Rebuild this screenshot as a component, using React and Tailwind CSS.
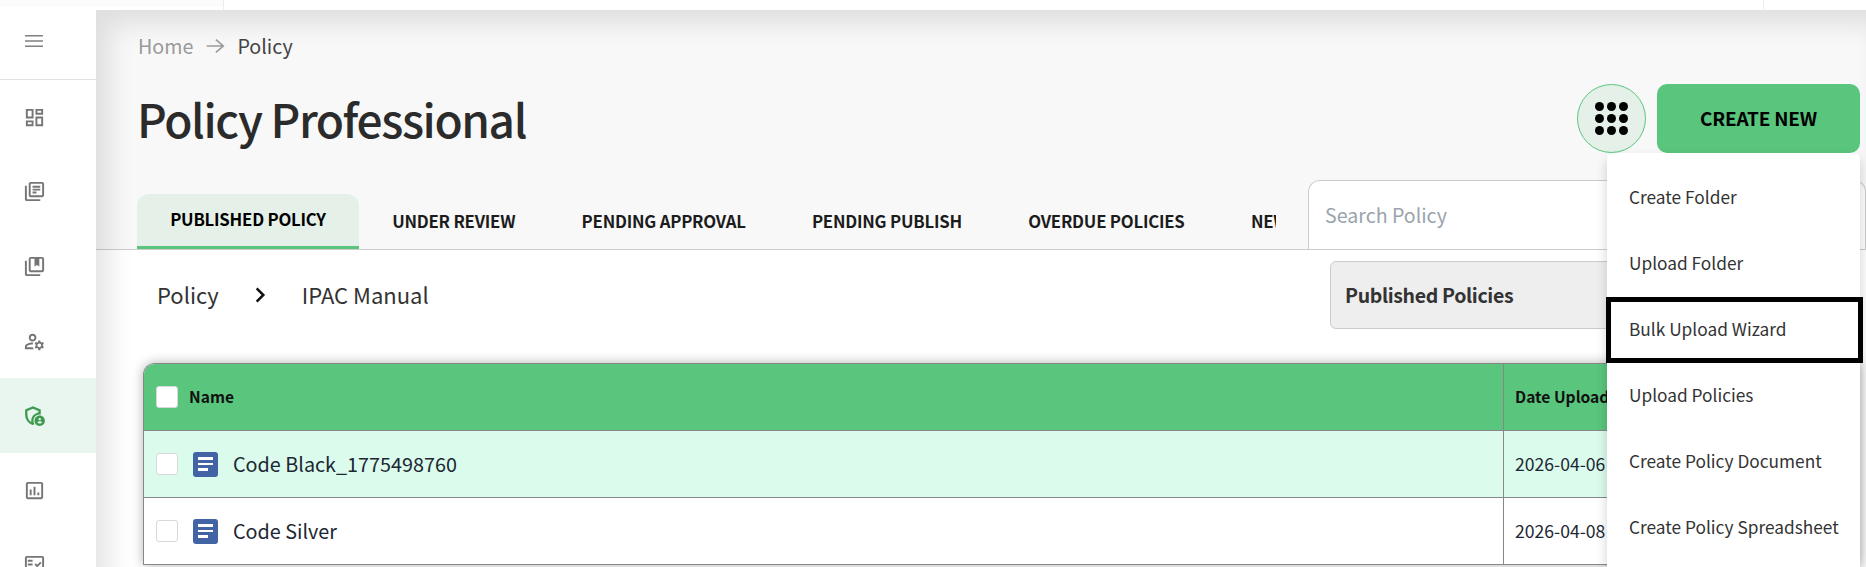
import { useState } from 'react';

const font = '[font-family:"Noto_Sans_CJK_SC","Noto_Sans",sans-serif]';

// Material outlined icons for the sidebar
const NAV_ICONS = [
  { d: 'M19 5v2h-4V5h4M9 5v6H5V5h4m10 8v6h-4v-6h4M9 17v2H5v-2h4M21 3h-8v6h8V3zM11 3H3v10h8V3zm10 8h-8v10h8V11zm-10 4H3v6h8v-6z' },
  { d: 'M4 6H2v14c0 1.1.9 2 2 2h14v-2H4V6zm16-4H8c-1.1 0-2 .9-2 2v12c0 1.1.9 2 2 2h12c1.1 0 2-.9 2-2V4c0-1.1-.9-2-2-2zm0 14H8V4h12v12zM10 9h8v2h-8zm0 3h4v2h-4zm0-6h8v2h-8z' },
  { d: 'M4 6H2v14c0 1.1.9 2 2 2h14v-2H4V6zm16-4H8c-1.1 0-2 .9-2 2v12c0 1.1.9 2 2 2h12c1.1 0 2-.9 2-2V4c0-1.1-.9-2-2-2zm0 14H8V4h4v8l2.5-1.5L17 12V4h3v12z' },
  { d: 'M4 18v-.65c0-.34.16-.66.41-.81C6.1 15.53 8.03 15 10 15c.03 0 .05 0 .08.01.1-.7.3-1.37.59-1.98-.22-.02-.44-.03-.67-.03-2.42 0-4.68.67-6.61 1.82-.88.52-1.39 1.5-1.39 2.53V20h9.26c-.42-.6-.75-1.28-.97-2H4zM10 12c2.21 0 4-1.79 4-4s-1.79-4-4-4-4 1.79-4 4 1.79 4 4 4zm0-6c1.1 0 2 .9 2 2s-.9 2-2 2-2-.9-2-2 .9-2 2-2zM20.75 16c0-.22-.03-.42-.06-.63l1.14-1.01-1-1.73-1.45.49c-.32-.27-.68-.48-1.08-.63L18 11h-2l-.3 1.49c-.4.15-.76.36-1.08.63l-1.45-.49-1 1.73 1.14 1.01c-.03.21-.06.41-.06.63s.03.42.06.63l-1.14 1.01 1 1.73 1.45-.49c.32.27.68.48 1.08.63L16 21h2l.3-1.49c.4-.15.76-.36 1.08-.63l1.45.49 1-1.73-1.14-1.01c.03-.21.06-.41.06-.63zM17 18c-1.1 0-2-.9-2-2s.9-2 2-2 2 .9 2 2-.9 2-2 2z' },
  {
    active: true,
    d: 'M17 11c.34 0 .67.04 1 .09V6.27L10.5 3 3 6.27v4.91c0 4.54 3.2 8.79 7.5 9.82.55-.13 1.08-.32 1.6-.55-.69-.98-1.1-2.17-1.1-3.45 0-3.31 2.69-6 6-6zM5.2 11.18V7.7l5.3-2.3 5.3 2.3v1.5c-3.4.6-6.9 3.5-6.9 7.8 0 .5.05.9.15 1.3C6.9 17.2 5.2 14.3 5.2 11.18zM17 12c-2.76 0-5 2.24-5 5s2.24 5 5 5 5-2.24 5-5-2.24-5-5-5zm0 2.38c.62 0 1.12.51 1.12 1.12s-.51 1.12-1.12 1.12-1.12-.51-1.12-1.12.5-1.12 1.12-1.12zm0 5.37c-.93 0-1.74-.46-2.24-1.17.05-.72 1.51-1.08 2.24-1.08s2.19.36 2.24 1.08c-.5.71-1.31 1.17-2.24 1.17z',
  },
  { d: 'M19 3H5c-1.1 0-2 .9-2 2v14c0 1.1.9 2 2 2h14c1.1 0 2-.9 2-2V5c0-1.1-.9-2-2-2zm0 16H5V5h14v14zM7 11h2v6H7zm4-3h2v9h-2zm4 6h2v3h-2z' },
  { d: 'M20 3H4c-1.1 0-2 .9-2 2v14c0 1.1.9 2 2 2h16c1.1 0 2-.9 2-2V5c0-1.1-.9-2-2-2zm0 16H4V5h16v14zM19.41 10.42 17.99 9l-3.17 3.17-1.41-1.42L12 12.16 14.82 15zM5 7h5v2H5zm0 4h5v2H5zm0 4h5v2H5z' },
];

const TABS = ['PUBLISHED POLICY', 'UNDER REVIEW', 'PENDING APPROVAL', 'PENDING PUBLISH', 'OVERDUE POLICIES', 'NEW POLICIES'];

const MENU_ITEMS = ['Create Folder', 'Upload Folder', 'Bulk Upload Wizard', 'Upload Policies', 'Create Policy Document', 'Create Policy Spreadsheet'];

const ROWS = [
  { name: 'Code Black_1775498760', date: '2026-04-06', bg: 'bg-[#dbfbec]' },
  { name: 'Code Silver', date: '2026-04-08', bg: 'bg-white' },
];

function MaterialIcon({ d, className }) {
  return (
    <svg viewBox="0 0 24 24" fill="currentColor" fillRule="evenodd" className={className}>
      <path d={d} />
    </svg>
  );
}

function Sidebar() {
  return (
    <aside className="w-[96px] shrink-0 bg-white">
      <div className="h-[70px] pr-[28px] pb-[7px] flex items-center justify-center border-b border-[#e2e2e2] text-[#808080]">
        <svg viewBox="0 0 24 24" fill="currentColor" className="w-[24px] h-[24px]">
          <path d="M3 18h18v-1.5H3V18zm0-5.25h18v-1.5H3v1.5zM3 6v1.5h18V6H3z" />
        </svg>
      </div>
      {NAV_ICONS.map((item) => (
        <div
          key={item.d}
          className={`h-[74.6px] pr-[28px] flex items-center justify-center ${
            item.active ? 'bg-[#e9f6ef] text-[#3e9a4f]' : 'text-[#757575]'
          }`}
        >
          <MaterialIcon d={item.d} className={item.active ? 'w-[25px] h-[25px]' : 'w-[23px] h-[23px]'} />
        </div>
      ))}
    </aside>
  );
}

function DotsButton() {
  return (
    <button className="w-[69px] h-[69px] rounded-full bg-[#e5f1e8] border border-[#5ac57d] flex items-center justify-center">
      <div className="grid grid-cols-3 gap-[3px]">
        {Array.from({ length: 9 }).map((_, i) => (
          <span key={i} className="w-[9px] h-[9px] rounded-full bg-black" />
        ))}
      </div>
    </button>
  );
}

function CreateMenu() {
  return (
    <div className="absolute left-[1607px] top-[153px] w-[253px] h-[414px] bg-white rounded-t-[6px] pt-[12px] shadow-[0_6px_12px_rgba(0,0,0,0.18)]">
      {MENU_ITEMS.map((label, i) =>
        i === 2 ? (
          <div
            key={label}
            className="h-[66px] -ml-px -mr-[3px] pl-[18px] pb-[3px] flex items-center border-[5px] border-black bg-white text-[17.3px] text-[#333]"
          >
            {label}
          </div>
        ) : (
          <div key={label} className="h-[66px] pl-[22px] pb-[3px] flex items-center text-[17.3px] text-[#333]">
            {label}
          </div>
        )
      )}
    </div>
  );
}

function DocIcon() {
  return (
    <div className="w-[25px] h-[25px] rounded-[3px] bg-[#4264a4] flex flex-col justify-center gap-[3px] pl-[5px]">
      <span className="block w-[15px] h-[2.5px] bg-white" />
      <span className="block w-[15px] h-[2.5px] bg-white" />
      <span className="block w-[10px] h-[2.5px] bg-white" />
    </div>
  );
}

function Checkbox() {
  return <span className="block w-[22px] h-[22px] rounded-[3px] bg-white border border-[#d8d8d8]" />;
}

export default function App() {
  const [search, setSearch] = useState('');

  return (
    <div className={`relative w-[1866px] h-[567px] overflow-hidden bg-white ${font}`}>
      {/* top app bar, cut off by the screenshot */}
      <div className="h-[10px] flex bg-white">
        <div className="w-[223px] h-[7px] bg-[#fbfbfb]" />
        <div className="w-px bg-[#ececec]" />
        <div className="flex-1" />
        <div className="w-px bg-[#ececec] mr-[102px]" />
      </div>

      <div className="flex">
        <Sidebar />

        <main className="relative flex-1 min-w-0">
          {/* Header */}
          <section className="h-[240px] bg-[#f8f8f8] border-b border-[#cccccc] flex flex-col">
            <div className="pl-[42px] pt-[21px] h-[74px] flex items-start text-[19.7px] leading-[30px]">
              <span className="text-[#9a9a9a]">Home</span>
              <svg viewBox="0 0 24 24" fill="none" stroke="#9a9a9a" strokeWidth="1.8" className="w-[22px] h-[30px] ml-[11px] mr-[11px]">
                <path d="M3 12h18M13 5l8 7-8 7" />
              </svg>
              <span className="text-[#444]">Policy</span>
            </div>

            <div className="pl-[41px] pr-[6px] h-[69px] flex items-center">
              <h1 className="flex-1 text-[46px] tracking-[-1.4px] leading-[69px] font-medium text-[#2b2b2b]">Policy Professional</h1>
              <div className="flex items-center gap-[11px]">
                <DotsButton />
                <button className="w-[203px] h-[69px] rounded-[10px] bg-[#5ac57d] text-[19px] tracking-[-0.2px] font-bold text-black">
                  CREATE NEW
                </button>
              </div>
            </div>

            <div className="mt-auto pl-[41px] flex items-end">
              <div className="w-[1139px] flex overflow-hidden shrink-0">
                {TABS.map((tab, i) => (
                  <div
                    key={tab}
                    className={`h-[55px] px-[33.15px] flex items-center whitespace-nowrap shrink-0 text-[16.75px] tracking-[-0.22px] font-semibold text-[#1c1c1c] ${
                      i === 0 ? 'rounded-t-[12px] bg-[#e5f1e8] border-b-[3px] border-[#5ac57d] text-black' : ''
                    }`}
                  >
                    {tab}
                  </div>
                ))}
              </div>
              <div className="ml-[32px] flex-1 h-[69px] bg-white border border-b-0 border-[#cccccc] rounded-t-[12px] pl-[16px] flex items-center">
                <input
                  value={search}
                  onChange={(e) => setSearch(e.target.value)}
                  placeholder="Search Policy"
                  className="w-full bg-transparent outline-none text-[19.6px] placeholder:text-[#9aa3ad]"
                />
              </div>
            </div>
          </section>

          {/* Folder path + status select */}
          <section className="h-[113px] bg-white flex items-start pl-[61px] pr-[6px]">
            <div className="h-[89px] flex items-center text-[22px] text-[#333]">
              <span>Policy</span>
              <svg viewBox="0 0 24 24" fill="none" stroke="#111" strokeWidth="3" className="w-[20px] h-[20px] ml-[31px] mr-[32px]">
                <path d="M8 4l8 8-8 8" />
              </svg>
              <span>IPAC Manual</span>
            </div>
            <div className="ml-auto mt-[11px] w-[530px] h-[68px] bg-[#eeeeee] border border-[#cccccc] rounded-[6px] pl-[14px] flex items-center text-[19.5px] tracking-[-0.35px] font-semibold text-[#333]">
              Published Policies
            </div>
          </section>

          {/* Table */}
          <section className="ml-[47px] mr-[6px] bg-white border-t border-l border-[#888] rounded-tl-[12px] overflow-hidden shadow-[0_0_12px_rgba(0,0,0,0.3)]">
            <div className="h-[67px] grid grid-cols-[1359px_1fr] bg-[#5ac57d] border-b border-[#888]">
              <div className="flex items-center pl-[12px] gap-[11px]">
                <Checkbox />
                <span className="text-[15.6px] font-bold text-[#111]">Name</span>
              </div>
              <div className="flex items-center pl-[11px] border-l border-[#888] text-[15.6px] font-bold text-[#111]">
                Date Uploaded
              </div>
            </div>
            {ROWS.map((row) => (
              <div key={row.name} className={`h-[67px] grid grid-cols-[1359px_1fr] border-b border-[#888] ${row.bg}`}>
                <div className="flex items-center pl-[12px]">
                  <Checkbox />
                  <span className="ml-[15px] mr-[15px]">
                    <DocIcon />
                  </span>
                  <span className="text-[19.8px] text-[#1c2733]">{row.name}</span>
                </div>
                <div className="flex items-center pl-[11px] border-l border-[#888] text-[17.6px] text-[#1c2733]">
                  {row.date}
                </div>
              </div>
            ))}
          </section>

          {/* soft shadow thrown on the content by the app bar and sidebar */}
          <div className="pointer-events-none absolute inset-0 shadow-[inset_14px_14px_26px_rgba(0,0,0,0.1)]" />
        </main>
      </div>

      <CreateMenu />
    </div>
  );
}
